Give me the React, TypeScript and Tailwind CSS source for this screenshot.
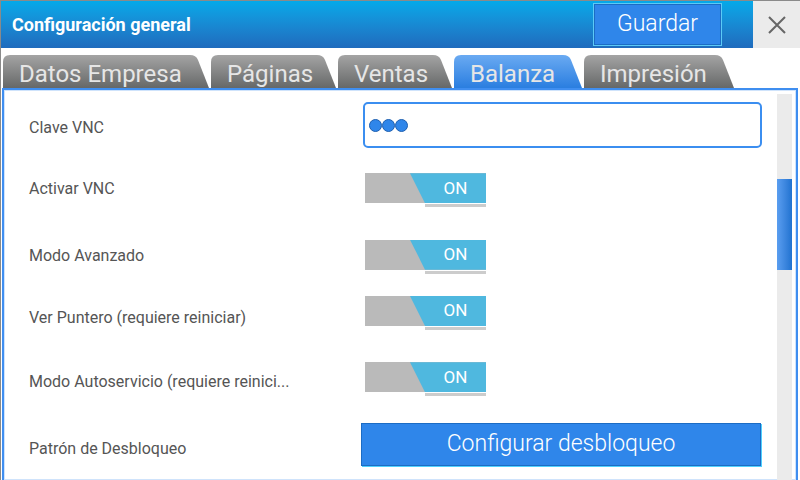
import React from "react";

const tabs = [
  { label: "Datos Empresa", width: 207, active: false },
  { label: "Páginas", width: 126, active: false },
  { label: "Ventas", width: 115, active: false },
  { label: "Balanza", width: 129, active: true },
  { label: "Impresión", width: 151, active: false },
];

function Tab({ label, width, active }: { label: string; width: number; active: boolean }) {
  const id = active ? "tab-on" : "tab-off";
  const w = width;
  return (
    <div className="relative h-[33px] shrink-0" style={{ width: w }}>
      <svg className="absolute inset-0" width={w} height={33} viewBox={`0 0 ${w} 33`}>
        <defs>
          <linearGradient id={id} x1="0" y1="0" x2="0" y2="1">
            <stop offset="0" stopColor={active ? "#6aaaf2" : "#a4a4a4"} />
            <stop offset="1" stopColor={active ? "#2a7ee0" : "#666868"} />
          </linearGradient>
        </defs>
        <path
          d={`M0,33 L0,7 Q0,0 7,0 L${w - 20},0 Q${w - 14},0 ${w - 12},5 L${w - 1},33 Z`}
          fill={`url(#${id})`}
        />
      </svg>
      <span className="absolute left-[16px] top-[3px] text-[24px] leading-[32px] text-[#e6e6e6] whitespace-nowrap">
        {label}
      </span>
    </div>
  );
}

function Toggle({ top }: { top: string }) {
  return (
    <div className={`relative w-[121px] h-[34px] ${top}`}>
      <div className="absolute left-0 top-0 w-[121px] h-[30px] bg-[#bababa]" />
      <div className="absolute left-0 top-0 w-[121px] h-[30px] bg-[#4fb8df] [clip-path:polygon(45px_0,121px_0,121px_30px,60px_30px)]" />
      <span className="absolute left-[60px] right-0 top-0 h-[30px] flex items-center justify-center text-[17px] text-white">
        ON
      </span>
      <div className="absolute left-[60px] top-[31px] w-[61px] h-[3px] bg-[#cccccc]" />
    </div>
  );
}

function Row({
  label,
  height,
  labelTop,
  children,
}: {
  label: string;
  height: string;
  labelTop: string;
  children: React.ReactNode;
}) {
  return (
    <div className={`flex ${height}`}>
      <div className={`w-[357px] pl-[25px] ${labelTop} text-[16px] leading-[20px] text-[#555555] whitespace-nowrap`}>
        {label}
      </div>
      <div className="flex-1">{children}</div>
    </div>
  );
}

export default function App() {
  return (
    <div className="w-[800px] h-[480px] overflow-hidden bg-white flex flex-col border-l border-t border-[#8a8a8a] font-['Roboto',sans-serif]">
      {/* header */}
      <div className="h-[47px] flex shrink-0">
        <div className="flex-1 flex items-center bg-gradient-to-b from-[#04a9e9] to-[#1f6bbd] pl-[11px] pr-[31px]">
          <h1 className="flex-1 text-white font-bold text-[18px]">Configuración general</h1>
          <button className="w-[129px] h-[43px] mt-[-1px] bg-[#2f86ea] border border-[#5ccaf6] shadow-[inset_0_0_0_1px_#1c6cc4] text-white text-[23px] font-light">
            Guardar
          </button>
        </div>
        <div className="w-[47px] bg-[#ebebeb] flex items-center justify-center">
          <svg width="20" height="20" viewBox="0 0 20 20" stroke="#666666" strokeWidth="2">
            <path d="M2 2 L18 18 M18 2 L2 18" />
          </svg>
        </div>
      </div>

      {/* tabs */}
      <div className="h-[40px] shrink-0 flex items-end pl-[2px] gap-[1px]">
        {tabs.map((t) => (
          <Tab key={t.label} {...t} />
        ))}
      </div>

      {/* panel */}
      <div className="flex-1 flex ml-[1px] mr-[2px] border-2 border-[#3f8ef0] border-b-0 min-h-0 shadow-[inset_0_0_0_1px_#cfe3fb]">
        <div className="flex-1 flex flex-col">
          <Row label="Clave VNC" height="h-[66px]" labelTop="pt-[28px]">
            <div className="mt-[12px] ml-[2px] w-[399px] h-[46px] border-2 border-[#3b8ef0] rounded-[5px] flex items-center pl-[4px]">
              {[0, 1, 2].map((i) => (
                <span key={i} className="w-[13px] h-[13px] rounded-full bg-[#2f86ea] border border-[#1d5fb0]" />
              ))}
            </div>
          </Row>
          <Row label="Activar VNC" height="h-[67px]" labelTop="pt-[24px]">
            <Toggle top="mt-[18px] ml-[4px]" />
          </Row>
          <Row label="Modo Avanzado" height="h-[62px]" labelTop="pt-[24px]">
            <Toggle top="mt-[18px] ml-[4px]" />
          </Row>
          <Row label="Ver Puntero (requiere reiniciar)" height="h-[64px]" labelTop="pt-[25px]">
            <Toggle top="mt-[13px] ml-[4px]" />
          </Row>
          <Row label="Modo Autoservicio (requiere reinici..." height="h-[65px]" labelTop="pt-[26px]">
            <Toggle top="mt-[16px] ml-[4px]" />
          </Row>
          <Row label="Patrón de Desbloqueo" height="h-[70px]" labelTop="pt-[28px]">
            <button className="mt-[12px] w-[400px] h-[43px] bg-[#2f86ea] border border-[#1c6cc4] shadow-[1px_1px_0_#4fd0ff] text-white text-[23px] font-light">
              Configurar desbloqueo
            </button>
          </Row>
        </div>
        <div className="w-[15px] mt-[4px] mr-[4px] ml-[10px] bg-[#ebebeb] flex flex-col">
          <div className="h-[85px]" />
          <div className="h-[91px] bg-gradient-to-r from-[#5a9ef0] to-[#1f72d0]" />
        </div>
      </div>
    </div>
  );
}
